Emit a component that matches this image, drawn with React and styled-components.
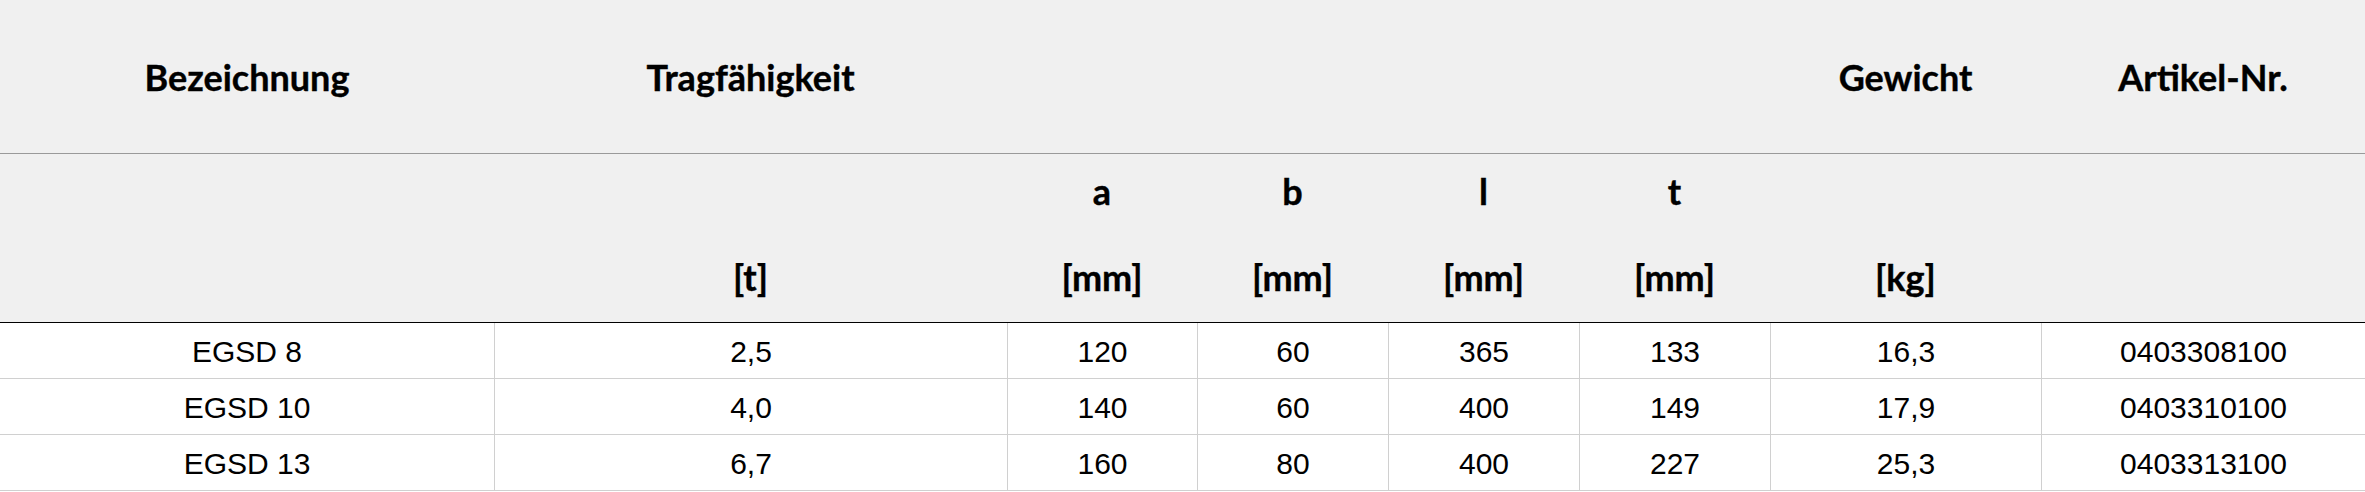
import React from "react";
import styled, { createGlobalStyle } from "styled-components";

const GlobalStyle = createGlobalStyle`
  html, body { margin: 0; padding: 0; background: #ffffff; }
  body { font-family: "Liberation Sans", Arial, sans-serif; color: #000; }
`;

const COLS = "494px 513px 190px 191px 191px 191px 271px 324px";

const Table = styled.div`
  width: 2365px;
  display: flex;
  flex-direction: column;
`;

const HeadRow = styled.div`
  display: grid;
  grid-template-columns: ${COLS};
  box-sizing: border-box;
  background: #f0f0f0;
  height: ${(p) => p.$height}px;
  border-bottom: 1px solid ${(p) => p.$line};
`;

const TitleCell = styled.div`
  display: flex;
  align-items: center;
  justify-content: center;
  font-family: Lato, "Open Sans", sans-serif;
  font-weight: 700;
  font-size: 36px;
  line-height: 42px;
  color: #000;
  -webkit-text-stroke: 0.4px #000;
  white-space: nowrap;
`;

const UnitCell = styled.div`
  display: flex;
  flex-direction: column;
  align-items: center;
  gap: 44px;
  padding-top: 16px;
  font-family: Lato, "Open Sans", sans-serif;
  font-weight: 700;
  font-size: 36px;
  line-height: 42px;
  color: #000;
  -webkit-text-stroke: 0.4px #000;
`;

const Line = styled.span`
  display: block;
  height: 42px;
`;

const BodyRow = styled.div`
  display: grid;
  grid-template-columns: ${COLS};
  box-sizing: border-box;
  height: 56px;
  border-bottom: 1px solid #d0d0d0;
`;

const BodyCell = styled.div`
  display: flex;
  align-items: center;
  justify-content: center;
  padding-top: 2px;
  box-sizing: border-box;
  font-family: "Liberation Sans", Arial, sans-serif;
  font-size: 30px;
  line-height: 34px;
  color: #000;
  border-left: ${(p) => (p.$first ? "none" : "1px solid #d0d0d0")};
`;

const titles = ["Bezeichnung", "Tragfähigkeit", "", "", "", "", "Gewicht", "Artikel-Nr."];
const symbols = ["", "", "a", "b", "l", "t", "", ""];
const units = ["", "[t]", "[mm]", "[mm]", "[mm]", "[mm]", "[kg]", ""];

const rows = [
  ["EGSD 8", "2,5", "120", "60", "365", "133", "16,3", "0403308100"],
  ["EGSD 10", "4,0", "140", "60", "400", "149", "17,9", "0403310100"],
  ["EGSD 13", "6,7", "160", "80", "400", "227", "25,3", "0403313100"],
];

export default function App() {
  return (
    <>
      <GlobalStyle />
      <Table>
        <HeadRow $height={154} $line="#9a9a9a">
          {titles.map((t, i) => (
            <TitleCell key={i}>{t}</TitleCell>
          ))}
        </HeadRow>
        <HeadRow $height={169} $line="#000">
          {units.map((u, i) => (
            <UnitCell key={i}>
              <Line>{symbols[i]}</Line>
              <Line>{u}</Line>
            </UnitCell>
          ))}
        </HeadRow>
        {rows.map((r, ri) => (
          <BodyRow key={ri}>
            {r.map((c, ci) => (
              <BodyCell key={ci} $first={ci === 0}>
                {c}
              </BodyCell>
            ))}
          </BodyRow>
        ))}
      </Table>
    </>
  );
}
